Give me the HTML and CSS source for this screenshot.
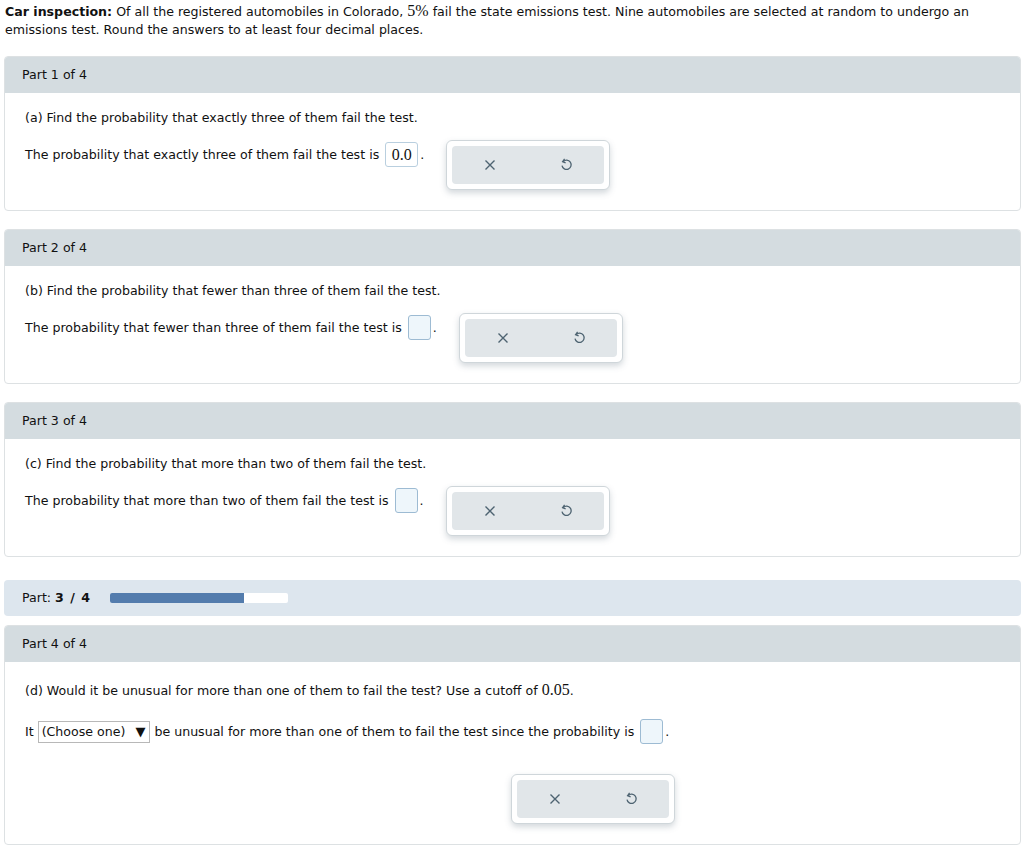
FILE: index.html
```html
<!DOCTYPE html>
<html lang="en">
<head>
    <meta charset="UTF-8">
    <title>Car inspection</title>
    <link rel="stylesheet" href="styles.css">
</head>
<body>

    <p class="intro"><b>Car inspection:</b> Of all the registered automobiles in Colorado, <span class="math">5%</span> fail the state emissions test. Nine automobiles are selected at random to undergo an emissions test. Round the answers to at least four decimal places.</p>

    <div class="card">
        <div class="card-head">Part 1 of 4</div>
        <div class="card-body">
            <p class="question">(a) Find the probability that exactly three of them fail the test.</p>
            <div class="answer-row">
                <div class="answer">The probability that exactly three of them fail the test is <span class="box filled">0.0</span>.</div>
                <div class="tools">
                    <div class="tools-inner">
                        <button class="tool"><svg width="12" height="12" viewBox="0 0 12 12"><path d="M1.5 1.5 L10.5 10.5 M10.5 1.5 L1.5 10.5" stroke="#4d6371" stroke-width="1.4" fill="none"/></svg></button>
                        <button class="tool"><svg width="14" height="14" viewBox="0 0 14 14"><path d="M4.2 3.6 A4.6 4.6 0 1 1 3 7.6" stroke="#4d6371" stroke-width="1.3" fill="none"/><path d="M5.6 0.8 L3.6 3.6 L6.6 4.8" stroke="#4d6371" stroke-width="1.3" fill="none"/></svg></button>
                    </div>
                </div>
            </div>
        </div>
    </div>

    <div class="card">
        <div class="card-head">Part 2 of 4</div>
        <div class="card-body">
            <p class="question">(b) Find the probability that fewer than three of them fail the test.</p>
            <div class="answer-row">
                <div class="answer">The probability that fewer than three of them fail the test is <span class="box"></span>.</div>
                <div class="tools">
                    <div class="tools-inner">
                        <button class="tool"><svg width="12" height="12" viewBox="0 0 12 12"><path d="M1.5 1.5 L10.5 10.5 M10.5 1.5 L1.5 10.5" stroke="#4d6371" stroke-width="1.4" fill="none"/></svg></button>
                        <button class="tool"><svg width="14" height="14" viewBox="0 0 14 14"><path d="M4.2 3.6 A4.6 4.6 0 1 1 3 7.6" stroke="#4d6371" stroke-width="1.3" fill="none"/><path d="M5.6 0.8 L3.6 3.6 L6.6 4.8" stroke="#4d6371" stroke-width="1.3" fill="none"/></svg></button>
                    </div>
                </div>
            </div>
        </div>
    </div>

    <div class="card">
        <div class="card-head">Part 3 of 4</div>
        <div class="card-body">
            <p class="question">(c) Find the probability that more than two of them fail the test.</p>
            <div class="answer-row">
                <div class="answer">The probability that more than two of them fail the test is <span class="box"></span>.</div>
                <div class="tools">
                    <div class="tools-inner">
                        <button class="tool"><svg width="12" height="12" viewBox="0 0 12 12"><path d="M1.5 1.5 L10.5 10.5 M10.5 1.5 L1.5 10.5" stroke="#4d6371" stroke-width="1.4" fill="none"/></svg></button>
                        <button class="tool"><svg width="14" height="14" viewBox="0 0 14 14"><path d="M4.2 3.6 A4.6 4.6 0 1 1 3 7.6" stroke="#4d6371" stroke-width="1.3" fill="none"/><path d="M5.6 0.8 L3.6 3.6 L6.6 4.8" stroke="#4d6371" stroke-width="1.3" fill="none"/></svg></button>
                    </div>
                </div>
            </div>
        </div>
    </div>

    <div class="progress">
        <span>Part: <b>3 / 4</b></span>
        <div class="bar"><div class="bar-fill" style="width: 75%"></div></div>
    </div>

    <div class="card last">
        <div class="card-head">Part 4 of 4</div>
        <div class="card-body">
            <p class="question tall">(d) Would it be unusual for more than one of them to fail the test? Use a cutoff of <span class="math">0.05</span>.</p>
            <div class="answer wide">It <span class="select">(Choose one) <span class="arrow">&#9660;</span></span> be unusual for more than one of them to fail the test since the probability is <span class="box"></span>.</div>
            <div class="tools centered">
                <div class="tools-inner">
                    <button class="tool"><svg width="12" height="12" viewBox="0 0 12 12"><path d="M1.5 1.5 L10.5 10.5 M10.5 1.5 L1.5 10.5" stroke="#4d6371" stroke-width="1.4" fill="none"/></svg></button>
                    <button class="tool"><svg width="14" height="14" viewBox="0 0 14 14"><path d="M4.2 3.6 A4.6 4.6 0 1 1 3 7.6" stroke="#4d6371" stroke-width="1.3" fill="none"/><path d="M5.6 0.8 L3.6 3.6 L6.6 4.8" stroke="#4d6371" stroke-width="1.3" fill="none"/></svg></button>
                </div>
            </div>
        </div>
    </div>

</body>
</html>
```

FILE: styles.css
```css
body {
    font-family: "DejaVu Sans", Verdana, sans-serif;
    font-size: 12.6px;
    line-height: 18px;
    color: #111;
    background: #fff;
    margin: 0;
    padding: 3px 3px 0 4px;
}

.intro {
    margin: 0 0 17px 1px;
    padding-right: 50px;
}

.math {
    font-family: "Liberation Serif", "Times New Roman", serif;
    font-size: 16px;
    line-height: 1;
}

/* part cards */
.card {
    border: 1px solid #dde1e3;
    border-radius: 4px;
    margin-bottom: 18px;
    overflow: hidden;
}

.card.last {
    margin-bottom: 0;
}

.card-head {
    background: #d4dce0;
    height: 37px;
    line-height: 37px;
    padding-left: 18px;
    margin: -1px -1px 0 -1px;
}

.card-body {
    padding: 16px 19px 20px;
}

.question {
    margin: 0 0 13px 1px;
}

.question.tall {
    margin-top: 4px;
}

.answer-row {
    display: flex;
    align-items: flex-start;
}

.answer {
    display: flex;
    align-items: center;
    height: 25px;
    margin-top: 2px;
    margin-left: 1px;
    white-space: nowrap;
}

.answer.wide {
    margin-top: 19px;
}

.box {
    display: inline-block;
    width: 21px;
    height: 23px;
    border: 1px solid #9dbbd3;
    border-radius: 3px;
    background: #eef6fb;
    margin: 0 2px 0 6px;
}

.box.filled {
    width: 31px;
    border-color: #b9cfdf;
    background: #fff;
    font-family: "Liberation Serif", "Times New Roman", serif;
    font-size: 16px;
    line-height: 23px;
    text-align: center;
    margin-left: 6px;
}

.select {
    display: inline-block;
    border: 1px solid #b8b8b8;
    height: 20px;
    line-height: 20px;
    padding: 0 4px 0 3px;
    margin: 0 4px 0 4px;
}

.arrow {
    margin-left: 6px;
    font-size: 13px;
}

/* check / reset buttons */
.tools {
    margin-left: 22px;
    border: 1px solid #cfd6da;
    border-radius: 6px;
    background: #fff;
    padding: 5px;
    box-shadow: 0 3px 6px rgba(80, 100, 115, 0.25);
}

.tools.centered {
    width: 152px;
    margin: 30px 0 0 487px;
}

.tools-inner {
    display: flex;
    background: #e1e6e9;
    border-radius: 4px;
}

.tool {
    width: 76px;
    height: 38px;
    border: none;
    background: none;
    padding: 0;
    display: flex;
    align-items: center;
    justify-content: center;
}

/* progress strip */
.progress {
    display: flex;
    align-items: center;
    background: #dde6ee;
    border-radius: 4px;
    height: 36px;
    padding-left: 18px;
    margin: 23px 0 9px;
}

.progress b {
    letter-spacing: 1px;
}

.bar {
    width: 178px;
    height: 10px;
    background: #fff;
    border-radius: 2px;
    margin-left: 19px;
    overflow: hidden;
}

.bar-fill {
    height: 100%;
    background: #537cad;
}
```
